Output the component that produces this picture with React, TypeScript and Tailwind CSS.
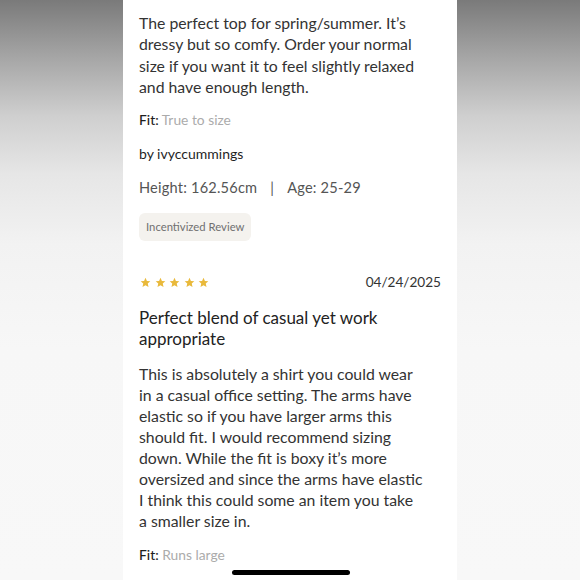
import React from "react";

function Star() {
  return (
    <svg width="11" height="11" viewBox="0 0 24 24" className="shrink-0">
      <path
        d="M12 1.8l3.1 6.9 7.4.7-5.6 5 1.7 7.4L12 17.9l-6.6 3.9 1.7-7.4-5.6-5 7.4-.7z"
        fill="#e9b93b"
      />
    </svg>
  );
}

function Lines({ lines }: { lines: string[] }) {
  return (
    <>
      {lines.map((l, i) => (
        <span key={i} className="block whitespace-nowrap">
          {l}
        </span>
      ))}
    </>
  );
}

export default function App() {
  return (
    <div
      className="relative w-[580px] h-[580px] flex justify-center overflow-hidden bg-[linear-gradient(180deg,#7a7a7a_0%,#a6a6a6_10%,#cfcfcf_20%,#e6e6e6_30%,#f2f2f2_42%,#f7f7f7_60%,#f8f8f8_100%)]"
      style={{ fontFamily: "Lato, 'Open Sans', sans-serif" }}
    >
      <div className="w-[334px] h-full bg-white px-4 pt-[12px] text-[#333333]">
        <p className="text-[15.8px] leading-[21.3px]">
          <Lines
            lines={[
              "The perfect top for spring/summer. It’s",
              "dressy but so comfy. Order your normal",
              "size if you want it to feel slightly relaxed",
              "and have enough length.",
            ]}
          />
        </p>
        <p className="mt-[14px] text-[13.8px] leading-[18px]">
          <span className="text-[#1e1e1e] font-medium">Fit:</span>{" "}
          <span className="text-[#ababab]">True to size</span>
        </p>
        <p className="mt-[16px] text-[14px] leading-[18px] text-[#1f1f1f]">by ivyccummings</p>
        <p className="mt-[15px] text-[14.6px] leading-[20px] text-[#555555] tracking-[0.2px]">
          Height: 162.56cm<span className="mx-[13px]">|</span>Age: 25-29
        </p>
        <div className="mt-[15px] inline-flex h-[28px] items-center rounded-[6px] bg-[#f4f2ee] px-[7px] text-[11.3px] text-[#707070]">
          Incentivized Review
        </div>
        <div className="mt-[31px] flex h-[20px] items-center justify-between">
          <div className="flex gap-[3.5px] pl-[1px]">
            <Star />
            <Star />
            <Star />
            <Star />
            <Star />
          </div>
          <span className="text-[13.6px] text-[#333333]">04/24/2025</span>
        </div>
        <h2 className="mt-[16px] text-[17px] leading-[20.5px] font-normal text-[#222222]">
          <Lines lines={["Perfect blend of casual yet work", "appropriate"]} />
        </h2>
        <p className="mt-[15px] text-[15.8px] leading-[20.9px]">
          <Lines
            lines={[
              "This is absolutely a shirt you could wear",
              "in a casual office setting. The arms have",
              "elastic so if you have larger arms this",
              "should fit. I would recommend sizing",
              "down. While the fit is boxy it’s more",
              "oversized and since the arms have elastic",
              "I think this could some an item you take",
              "a smaller size in.",
            ]}
          />
        </p>
        <p className="mt-[15px] text-[13.8px] leading-[18px]">
          <span className="text-[#1e1e1e] font-medium">Fit:</span>{" "}
          <span className="text-[#ababab]">Runs large</span>
        </p>
      </div>
      <div className="absolute left-[232px] top-[570px] h-[5px] w-[118px] rounded-full bg-black" />
    </div>
  );
}
